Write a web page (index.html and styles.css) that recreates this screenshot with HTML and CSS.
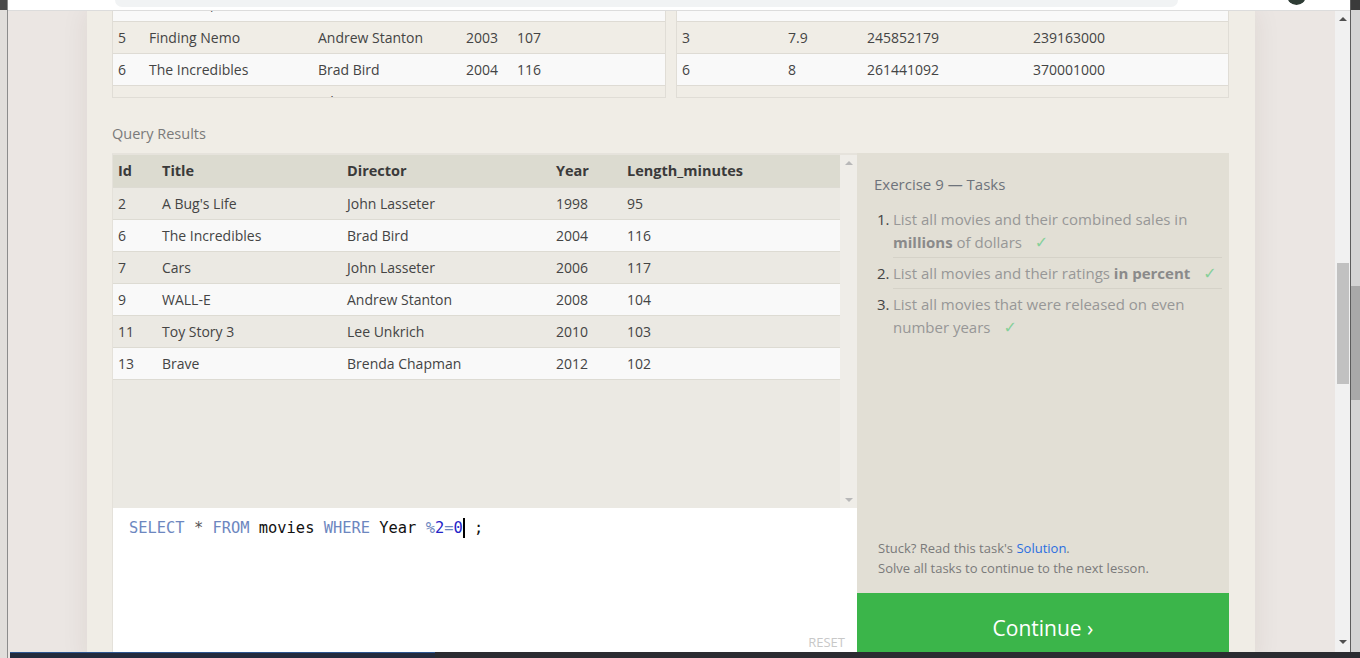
FILE: index.html
```html
<!DOCTYPE html>
<html lang="en">
<head>
<meta charset="utf-8">
<title>SQLBolt - Exercise 9</title>
<link rel="stylesheet" href="styles.css">
</head>
<body>
<div class="screen">
  <div class="edge-left"><div class="edge-left-top"></div></div>
  <div class="window">
    <div class="chrome">
      <div class="pill"></div>
      <div class="avatar"></div>
    </div>
    <div class="viewport">
      <div class="page">
        <div class="container">
          <div class="top-tables">
            <div class="tbox">
              <table class="dtable t-movies">
                <tr class="r-w"><td>4</td><td>Monsters, Inc.</td><td>Pete Docter</td><td>2001</td><td>92</td></tr>
                <tr class="r-b"><td>5</td><td>Finding Nemo</td><td>Andrew Stanton</td><td>2003</td><td>107</td></tr>
                <tr class="r-w"><td>6</td><td>The Incredibles</td><td>Brad Bird</td><td>2004</td><td>116</td></tr>
                <tr class="r-b"><td>7</td><td>Cars</td><td>John Lasseter</td><td>2006</td><td>117</td></tr>
              </table>
            </div>
            <div class="tbox">
              <table class="dtable t-box">
                <tr class="r-w"><td>12</td><td>6.4</td><td>191452396</td><td>368400000</td></tr>
                <tr class="r-b"><td>3</td><td>7.9</td><td>245852179</td><td>239163000</td></tr>
                <tr class="r-w"><td>6</td><td>8</td><td>261441092</td><td>370001000</td></tr>
                <tr class="r-b"><td>9</td><td>8.5</td><td>223808164</td><td>297503696</td></tr>
              </table>
            </div>
          </div>

          <div class="label">Query Results</div>

          <div class="workspace">
            <div class="left-col">
              <div class="results">
                <div class="results-body">
                  <table class="rtable">
                    <tr class="rhead"><th>Id</th><th>Title</th><th>Director</th><th>Year</th><th>Length_minutes</th></tr>
                    <tr class="rr-a"><td>2</td><td>A Bug's Life</td><td>John Lasseter</td><td>1998</td><td>95</td></tr>
                    <tr class="rr-b"><td>6</td><td>The Incredibles</td><td>Brad Bird</td><td>2004</td><td>116</td></tr>
                    <tr class="rr-a"><td>7</td><td>Cars</td><td>John Lasseter</td><td>2006</td><td>117</td></tr>
                    <tr class="rr-b"><td>9</td><td>WALL-E</td><td>Andrew Stanton</td><td>2008</td><td>104</td></tr>
                    <tr class="rr-a"><td>11</td><td>Toy Story 3</td><td>Lee Unkrich</td><td>2010</td><td>103</td></tr>
                    <tr class="rr-b"><td>13</td><td>Brave</td><td>Brenda Chapman</td><td>2012</td><td>102</td></tr>
                  </table>
                </div>
                <div class="rscroll">
                  <span class="tri-up small"></span>
                  <span class="tri-down small"></span>
                </div>
              </div>
              <div class="editor">
                <div class="code"><span class="kw">SELECT</span> <span class="op">*</span> <span class="kw">FROM</span> movies <span class="kw">WHERE</span> Year <span class="kw">%</span><span class="num">2</span><span class="kw">=</span><span class="num">0</span><span class="cursor"></span> ;</div>
                <div class="reset">RESET</div>
              </div>
            </div>

            <div class="right-col">
              <div class="tasks">
                <div class="tasks-title">Exercise 9 — Tasks</div>
                <ol class="task-list">
                  <li><span class="tnum">1.</span><span class="ttxt">List all movies and their combined sales in <b>millions</b> of dollars <span class="check">✓</span></span></li>
                  <li><span class="tnum">2.</span><span class="ttxt">List all movies and their ratings <b>in percent</b> <span class="check">✓</span></span></li>
                  <li><span class="tnum">3.</span><span class="ttxt last">List all movies that were released on even number years <span class="check">✓</span></span></li>
                </ol>
                <div class="stuck">
                  <div>Stuck? Read this task's <span class="link">Solution</span>.</div>
                  <div>Solve all tasks to continue to the next lesson.</div>
                </div>
              </div>
              <div class="continue">Continue ›</div>
            </div>
          </div>
        </div>
      </div>
      <div class="vscroll">
        <span class="tri-up"></span>
        <div class="vthumb"></div>
        <span class="tri-down"></span>
      </div>
    </div>
  </div>
  <div class="edge-right">
    <div class="edge-right-top"></div>
    <div class="edge-right-thumb"></div>
  </div>
  <div class="taskbar"><div class="taskbar-left"></div></div>
</div>
</body>
</html>
```

FILE: styles.css
```css
* { box-sizing: border-box; margin: 0; padding: 0; }
html, body { height: 100%; overflow: hidden; }
body {
  font-family: "Open Sans", "Liberation Sans", sans-serif;
  background: #ebe6e3;
  color: #444;
}

.screen {
  position: relative;
  display: flex;
  width: 1360px;
  height: 658px;
  overflow: hidden;
}

/* left window edge */
.edge-left {
  width: 8px;
  flex: none;
  background: #e1dedb;
  border-right: 1px solid #8c8c8c;
}
.edge-left-top { height: 10px; background: #4b4b4b; }

/* browser window */
.window {
  flex: 1;
  min-width: 0;
  display: flex;
  flex-direction: column;
}
.chrome {
  flex: none;
  height: 11px;
  background: #ffffff;
  border-bottom: 1px solid #dcdcdc;
  display: flex;
  align-items: flex-start;
  overflow: hidden;
}
.pill {
  width: 1063px;
  height: 7px;
  margin-left: 107px;
  background: #f1f3f4;
  border-radius: 0 0 14px 14px;
}
.avatar {
  width: 19px;
  height: 19px;
  margin-left: 109px;
  margin-top: -14px;
  border-radius: 50%;
  background: #2e3c35;
}

.viewport {
  flex: 1;
  min-height: 0;
  display: flex;
}
.page {
  flex: 1;
  min-width: 0;
  overflow: hidden;
  background: #ebe6e3;
}
.container {
  width: 1168px;
  min-height: 100%;
  margin-left: 79px;
  padding: 0 26px 0 25px;
  background: #f0ede6;
  box-shadow: 0 0 26px rgba(60, 40, 20, 0.08);
}

/* top (scrolled) data tables */
.top-tables {
  display: grid;
  grid-template-columns: 554px 553px;
  column-gap: 10px;
}
.tbox {
  height: 87px;
  overflow: hidden;
  border: 1px solid #e0ddd6;
  border-top: none;
}
.dtable {
  width: 100%;
  border-collapse: collapse;
  margin-top: -22px;
  font-size: 14px;
  color: #444;
}
.dtable td {
  height: 32px;
  padding: 0 0 0 5px;
  border-bottom: 1px solid #dedbd4;
  white-space: nowrap;
  vertical-align: middle;
}
.r-w { background: #f9f9f9; }
.r-b { background: #f0ede6; }
.t-movies td:nth-child(1) { width: 31px; }
.t-movies td:nth-child(2) { width: 169px; }
.t-movies td:nth-child(3) { width: 148px; }
.t-movies td:nth-child(4) { width: 51px; }
.t-box td:nth-child(1) { width: 106px; }
.t-box td:nth-child(2) { width: 79px; }
.t-box td:nth-child(3) { width: 166px; }

.label {
  margin-top: 26px;
  margin-bottom: 9px;
  height: 20px;
  line-height: 20px;
  font-size: 14.5px;
  color: #7a7a7a;
}

/* workspace */
.workspace {
  display: grid;
  grid-template-columns: 745px 372px;
}
.left-col { display: flex; flex-direction: column; }

.results {
  height: 355px;
  display: flex;
  border-top: 2px solid #e6e3dc;
  border-left: 1px solid #e4e1da;
  background: #ebe9e3;
}
.results-body { flex: 1; min-width: 0; overflow: hidden; }
.rtable {
  width: 100%;
  border-collapse: collapse;
  font-size: 14px;
  color: #444;
}
.rtable th, .rtable td {
  text-align: left;
  padding: 0 0 0 5px;
  white-space: nowrap;
  border-bottom: 1px solid #dddbd3;
  vertical-align: middle;
}
.rtable th {
  height: 32px;
  font-weight: 700;
  color: #3a3a3a;
  background: #dcdbd0;
  font-size: 14.5px;
}
.rtable td { height: 32px; }
.rr-a { background: #ebe9e3; }
.rr-b { background: #f9f9f9; }
.rtable th:nth-child(1) { width: 44px; }
.rtable th:nth-child(2) { width: 185px; }
.rtable th:nth-child(3) { width: 209px; }
.rtable th:nth-child(4) { width: 71px; }

.rscroll {
  width: 17px;
  flex: none;
  background: #efede8;
  display: flex;
  flex-direction: column;
  align-items: center;
  justify-content: space-between;
  padding: 6px 0 6px;
}

.tri-up, .tri-down {
  display: block;
  width: 0;
  height: 0;
  border-left: 4px solid transparent;
  border-right: 4px solid transparent;
}
.tri-up { border-bottom: 4px solid #505050; }
.tri-down { border-top: 4px solid #505050; }
.tri-up.small { border-bottom-color: #b8b8b8; }
.tri-down.small { border-top-color: #b8b8b8; }

.editor {
  height: 155px;
  background: #ffffff;
  border-left: 1px solid #e4e1da;
  display: flex;
  flex-direction: column;
  padding: 10px 12px 12px 15px;
}
.code {
  font-family: "DejaVu Sans Mono", "Liberation Mono", monospace;
  font-size: 15.4px;
  line-height: 20px;
  color: #111;
  white-space: pre;
  padding-left: 1px;
}
.kw { color: #6d87bf; }
.op { color: #555; }
.num { color: #2424c8; }
.cursor {
  display: inline-block;
  width: 2px;
  height: 20px;
  background: #000;
  vertical-align: top;
}
.reset {
  margin-top: auto;
  align-self: flex-end;
  font-size: 13px;
  color: #c8c8c8;
  line-height: 18px;
}

/* tasks */
.right-col { display: flex; flex-direction: column; }
.tasks {
  height: 440px;
  background: #e2dfd5;
  padding: 20px 7px 15px 17px;
  display: flex;
  flex-direction: column;
}
.tasks-title {
  font-size: 15px;
  line-height: 22px;
  color: #6e737b;
}
.task-list {
  list-style: none;
  margin-top: 13px;
}
.task-list li {
  display: flex;
  align-items: flex-start;
  font-size: 15px;
  line-height: 23px;
}
.tnum {
  width: 16px;
  flex: none;
  margin-left: 3px;
  color: #444;
}
.ttxt {
  flex: 1;
  color: #979797;
  padding: 0 0 3px;
  margin-bottom: 4px;
  border-bottom: 1px solid #d5d2c8;
}
.ttxt.last { border-bottom: none; }
.ttxt b { font-weight: 700; color: #8a8a8a; }
.check {
  font-family: "DejaVu Sans", sans-serif;
  color: #86d09a;
  margin-left: 9px;
  font-size: 16px;
  line-height: 20px;
}
.stuck {
  margin-top: auto;
  font-size: 13px;
  line-height: 20px;
  color: #7a7a7a;
  padding-left: 4px;
}
.link { color: #2a6ee0; }

.continue {
  height: 70px;
  background: #3bb54a;
  color: #ffffff;
  font-size: 21px;
  display: flex;
  align-items: center;
  justify-content: center;
}

/* page scrollbar */
.vscroll {
  width: 15px;
  flex: none;
  background: #f1f1f1;
  display: flex;
  flex-direction: column;
  align-items: center;
  padding: 6px 0 14px;
}
.vthumb {
  width: 12px;
  height: 121px;
  margin-top: 242px;
  margin-bottom: auto;
  background: #c1c1c1;
}

/* right window edge */
.edge-right {
  width: 10px;
  flex: none;
  background: #d4d4d4;
  border-left: 1px solid #5c5c5c;
  display: flex;
  flex-direction: column;
}
.edge-right-top { height: 10px; background: #3a3a3a; }
.edge-right-thumb {
  margin-top: 276px;
  height: 114px;
  background: #a9a9a9;
}

/* taskbar strip over the bottom */
.taskbar {
  position: absolute;
  left: 10px;
  right: 0;
  bottom: 0;
  height: 6px;
  background: #2b2c31;
}
.taskbar-left {
  width: 425px;
  height: 6px;
  background: #232b3d;
  border-top: 1px solid #2d5590;
}
```
